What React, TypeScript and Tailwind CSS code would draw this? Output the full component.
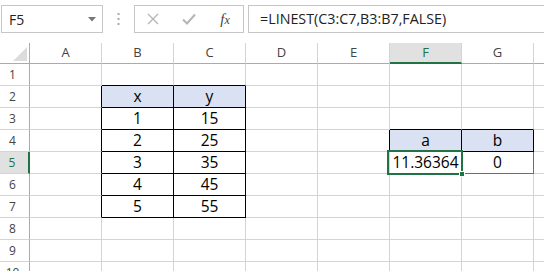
const cols = ['A', 'B', 'C', 'D', 'E', 'F', 'G', '']
const rows = [1, 2, 3, 4, 5, 6, 7, 8, 9, 10]

const data: Record<string, string> = {
  B2: 'x', C2: 'y',
  B3: '1', C3: '15',
  B4: '2', C4: '25',
  B5: '3', C5: '35',
  B6: '4', C6: '45',
  B7: '5', C7: '55',
  F4: 'a', G4: 'b',
  F5: '11.36364', G5: '0',
}

const headerCells = ['B2', 'C2', 'F4', 'G4']

function inBlack(c: number, r: number) {
  // B2:C7 and F4:G4 have thin black borders
  if (c >= 1 && c <= 2 && r >= 2 && r <= 7) return true
  if (c >= 5 && c <= 6 && r === 4) return true
  return false
}

function Cell({ c, r }: { c: number; r: number }) {
  const key = cols[c] + r
  const rightBlack = inBlack(c, r) || inBlack(c + 1, r)
  const bottomBlack = inBlack(c, r) || inBlack(c, r + 1)
  const rightBlue = key === 'G5'
  const bottomBlue = key === 'G5' || key === 'F5'
  const text = data[key]
  return (
    <div
      className={
        'relative flex h-[22px] items-center justify-center border-r border-b text-[15.5px] text-black ' +
        (rightBlack ? 'border-r-black ' : rightBlue ? 'border-r-[#4472c4] ' : 'border-r-[#d4d4d4] ') +
        (bottomBlack ? 'border-b-black ' : bottomBlue ? 'border-b-[#4472c4] ' : 'border-b-[#d4d4d4] ') +
        (headerCells.includes(key) ? 'bg-[#d9e1f2]' : 'bg-white')
      }
    >
      {text && <span className="leading-none">{text}</span>}
      {key === 'F5' && (
        <div className="pointer-events-none absolute -top-[2px] -right-[2px] -bottom-[2px] -left-[3px] z-10 border-2 border-[#217346]">
          <div className="absolute -right-[4px] -bottom-[4px] h-[6px] w-[6px] border border-white bg-[#217346]" />
        </div>
      )}
    </div>
  )
}

export default function App() {
  return (
    <div className="h-[271px] w-[544px] overflow-hidden bg-white font-['Open_Sans',sans-serif]">
      {/* formula bar */}
      <div className="flex h-[43px] items-start pt-[5px]">
        <div className="ml-px flex h-[28px] w-[102px] items-center justify-between border border-[#c6c6c6] pr-[6px] pl-[7px]">
          <span className="text-[14px] text-[#222]">F5</span>
          <svg width="8" height="5" viewBox="0 0 8 5">
            <path d="M0 0h8L4 4.5z" fill="#777" />
          </svg>
        </div>
        <div className="flex h-[28px] w-[31px] items-center justify-center">
          <svg width="3" height="12" viewBox="0 0 3 12">
            <rect x="0.5" y="0" width="2" height="2" fill="#aaa" />
            <rect x="0.5" y="5" width="2" height="2" fill="#aaa" />
            <rect x="0.5" y="10" width="2" height="2" fill="#aaa" />
          </svg>
        </div>
        <div className="flex h-[28px] w-[110px] items-center border border-[#c6c6c6]">
          <div className="flex w-[36px] justify-center">
            <svg width="12" height="12" viewBox="0 0 12 12">
              <path d="M1 1l10 10M11 1L1 11" stroke="#b5b5b5" strokeWidth="1.3" />
            </svg>
          </div>
          <div className="flex w-[36px] justify-center">
            <svg width="14" height="12" viewBox="0 0 14 12">
              <path d="M1 6.5l4 4L13 1.5" stroke="#b5b5b5" strokeWidth="2" fill="none" />
            </svg>
          </div>
          <div className="flex w-[36px] justify-center">
            <span className="font-['Liberation_Serif',serif] text-[15px] text-[#444] italic">
              f<span className="text-[12px]">x</span>
            </span>
          </div>
        </div>
        <div className="ml-[4px] flex h-[28px] flex-1 items-center border border-r-0 border-[#c6c6c6] pl-[11px]">
          <span className="text-[14.3px] text-[#222]">=LINEST(C3:C7,B3:B7,FALSE)</span>
        </div>
      </div>

      {/* sheet */}
      <div className="grid grid-cols-[30px_repeat(7,72px)_20px]">
        {/* header row */}
        <div className="relative h-[21px] border-r border-b border-r-[#ababab] border-b-[#ababab]">
          <svg className="absolute top-[4px] left-[13px]" width="14" height="14" viewBox="0 0 14 14">
            <path d="M14 0V14H0z" fill="#dcdcdc" />
          </svg>
        </div>
        {cols.map((c) => (
          <div
            key={c || 'h'}
            className={
              'flex h-[21px] items-center justify-center border-r border-b text-[13px] ' +
              (c === 'F'
                ? 'border-r-[#d4d4d4] border-b-2 border-b-[#217346] bg-[#e1e1e1] text-[#217346]'
                : 'border-r-[#d4d4d4] border-b-[#ababab] text-[#444]')
            }
          >
            {c}
          </div>
        ))}

        {rows.map((r) => (
          <div key={r} className="contents">
            <div
              className={
                'flex h-[22px] items-center justify-center border-b pr-[4px] text-[12px] ' +
                (r === 5
                  ? 'border-r-2 border-r-[#217346] border-b-[#d4d4d4] bg-[#e1e1e1] text-[#217346]'
                  : 'border-r border-r-[#ababab] border-b-[#d4d4d4] text-[#444]')
              }
            >
              {r}
            </div>
            {cols.map((_, c) => (
              <Cell key={c} c={c} r={r} />
            ))}
          </div>
        ))}
      </div>
    </div>
  )
}
